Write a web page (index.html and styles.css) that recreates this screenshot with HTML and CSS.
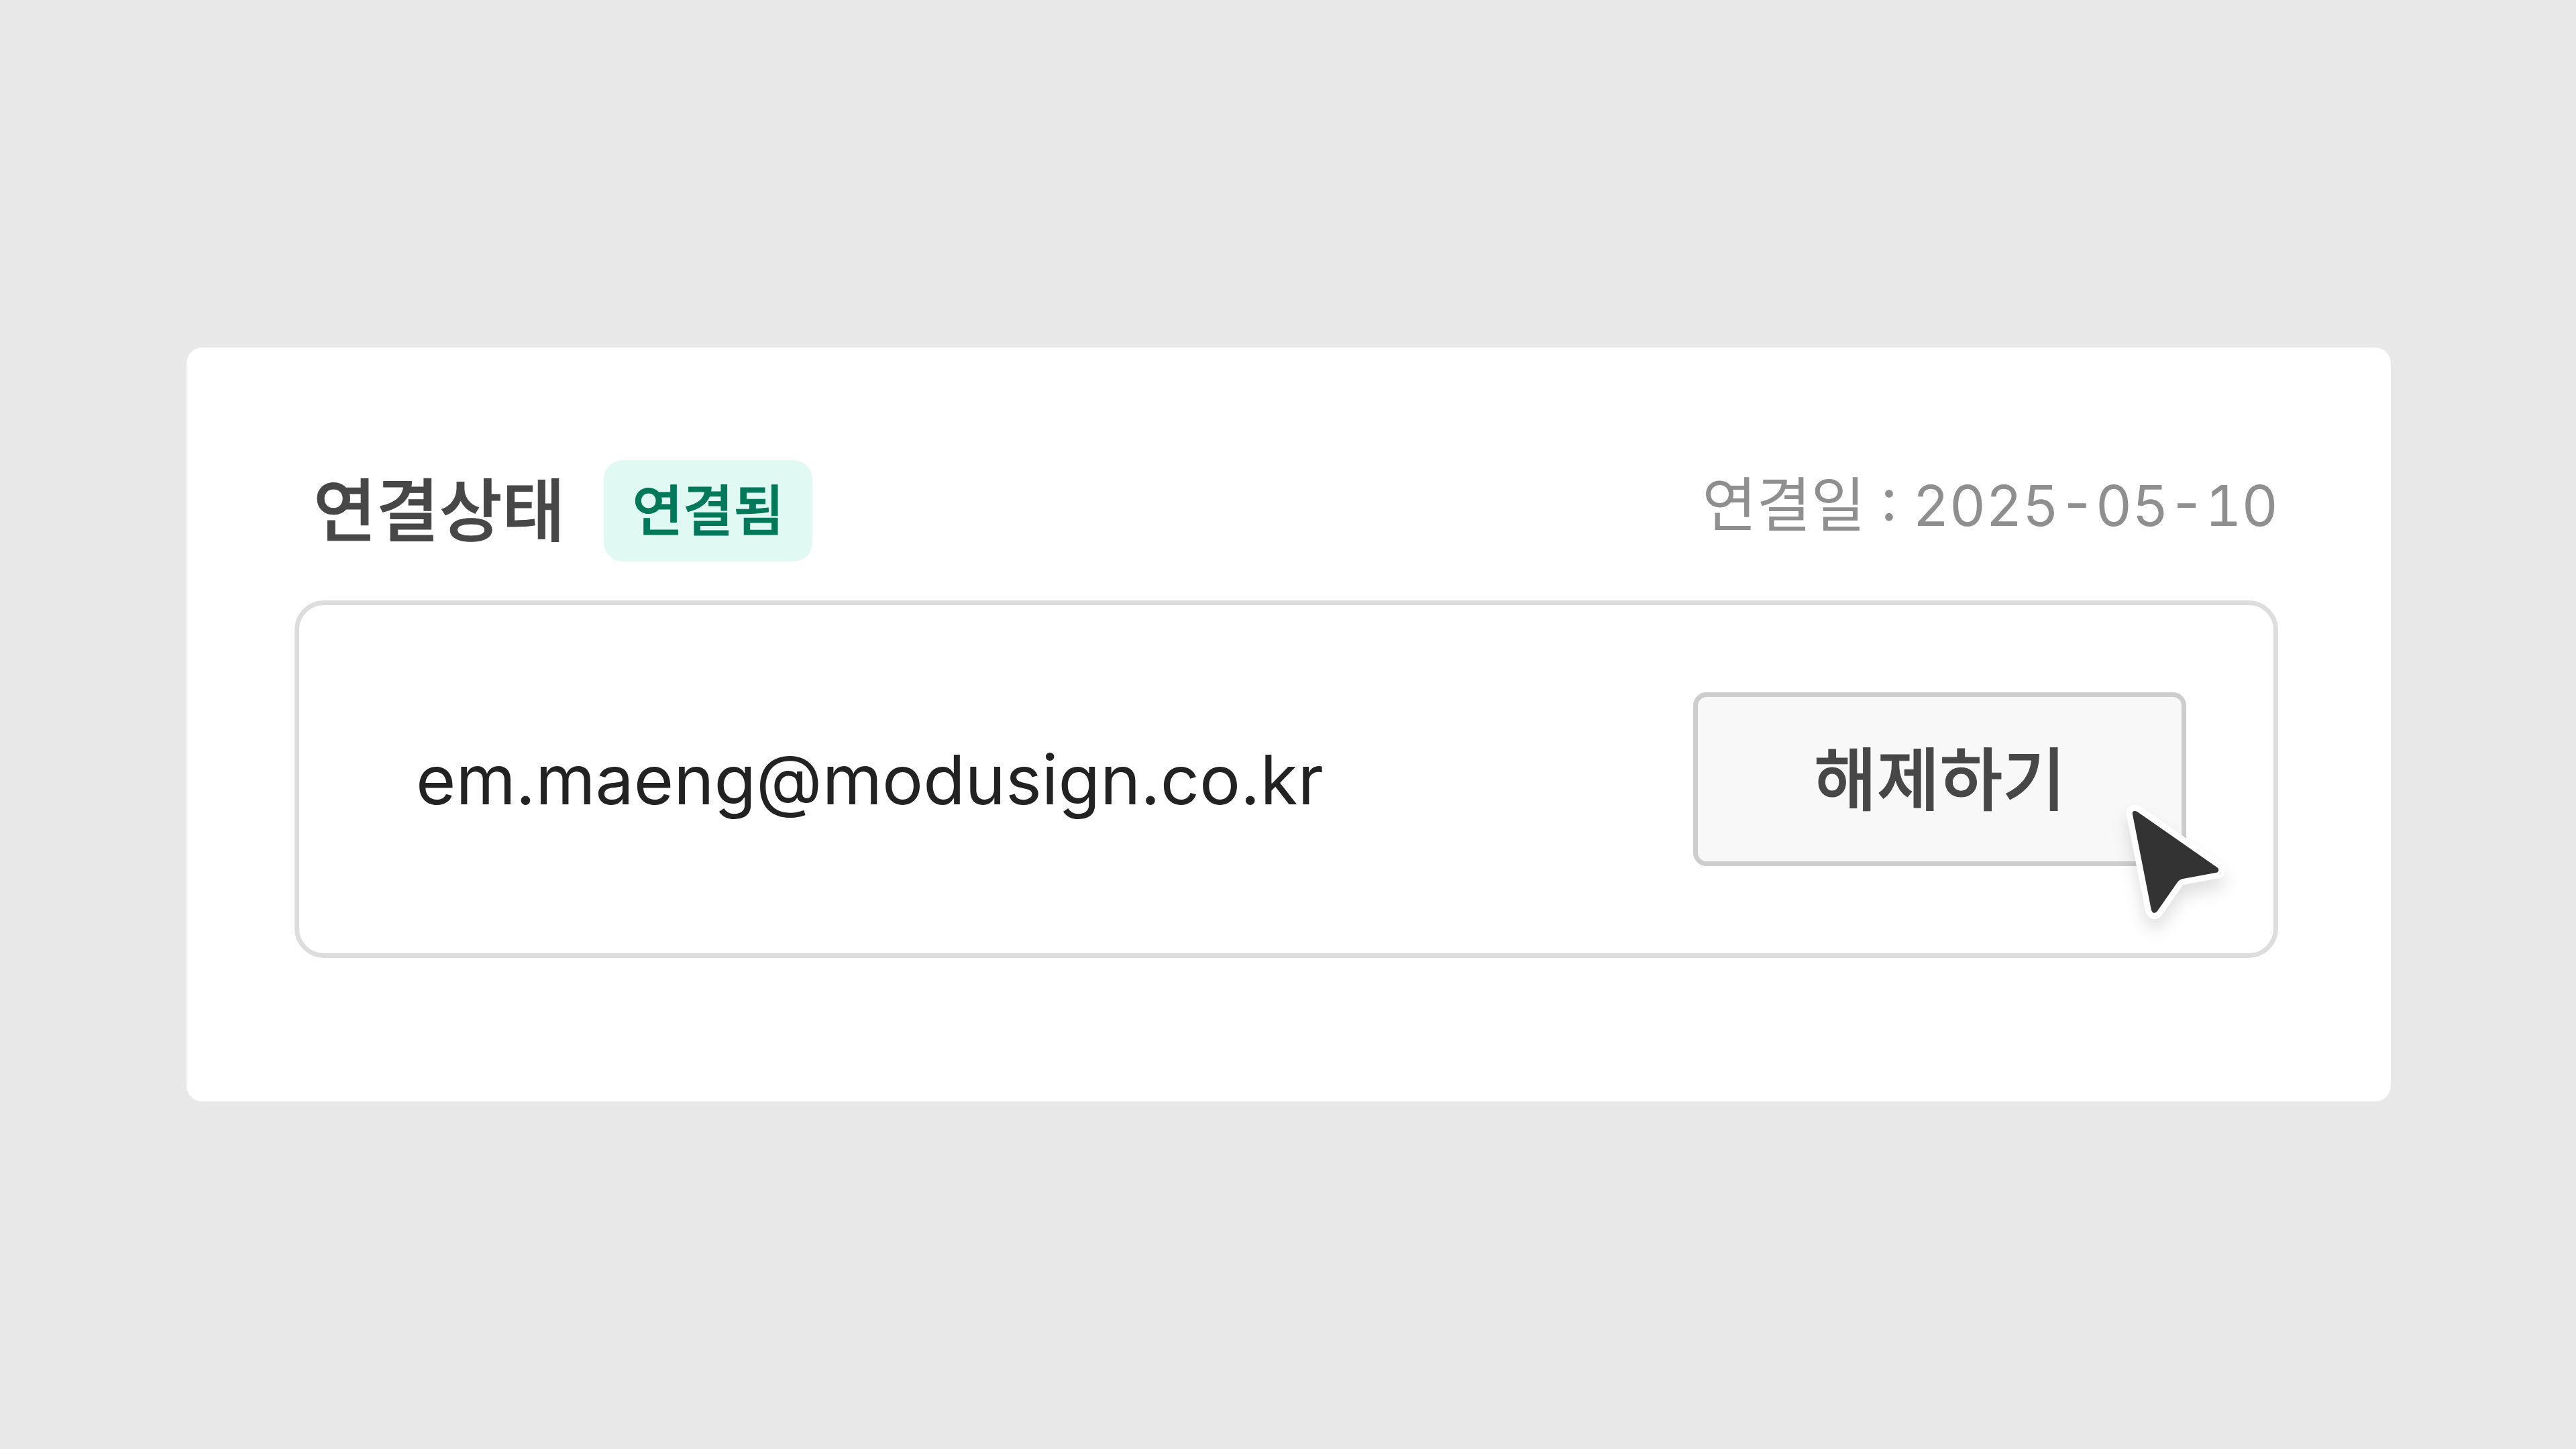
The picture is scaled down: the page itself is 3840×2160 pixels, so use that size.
FILE: index.html
```html
<!DOCTYPE html>
<html lang="ko">
<head>
    <meta charset="UTF-8">
    <meta name="viewport" content="width=device-width, initial-scale=1.0">
    <title>연결상태</title>
    <link rel="stylesheet" href="styles.css">
</head>
<body>
    <main class="card">
        <header class="card-header">
            <h1>연결상태</h1>
            <span class="badge">연결됨</span>
            <p class="date">연결일 : <time datetime="2025-05-10">2025-05-10</time></p>
        </header>

        <section class="account">
            <p class="email">em.maeng@modusign.co.kr</p>
            <div class="action">
                <button type="button">해제하기</button>
                <svg class="cursor" viewBox="0 0 200 240" aria-hidden="true">
                    <path d="M29 34Q28 29 32 29Q34 29 36 30L155 113Q158 115 157 118Q156 121 153 121L104 130Q99 131 96 135L66 178Q64 181 61 181Q58 180 57 177Z"/>
                </svg>
            </div>
        </section>
    </main>
</body>
</html>
```
FILE: styles.css
```css
* {
    box-sizing: border-box;
}
body {
    font-family: Inter, "Noto Sans CJK KR", sans-serif;
    margin: 0;
    padding: 0 276px 0 278px;
    min-height: 100vh;
    display: flex;
    align-items: center;
    background: #e8e8e8;
    color: #474747;
}
h1, p {
    margin: 0;
}
/* medium is a little thin for the labels, bold is too heavy */
h1, .badge, button {
    font-weight: 500;
    -webkit-text-stroke: 1px currentColor;
}
.card {
    flex: 1;
    padding: 168px 168px 214px 161px;
    background: #fff;
    border-radius: 24px;
}
.card-header {
    display: flex;
    align-items: center;
    margin-bottom: 58px;
    padding-left: 28px;
}
h1 {
    font-size: 102px;
    line-height: 148px;
}
.badge {
    margin-left: 58px;
    padding: 0 42px;
    background: #e1f9f3;
    color: #00795a;
    border-radius: 28px;
    font-size: 82px;
    line-height: 151px;
}
.date {
    margin-left: auto;
    padding-bottom: 18px;
    color: #8f8f8f;
    font-size: 88px;
    line-height: 128px;
    font-feature-settings: "case", "tnum";
}
.date time {
    font-size: 84px;
}
.account {
    display: flex;
    align-items: center;
    justify-content: space-between;
    padding: 130px;
    padding-left: 174px;
    border: 7px solid #ddd;
    border-radius: 44px;
}
.email {
    color: #222;
    font-size: 102px;
    line-height: 148px;
}
.action {
    position: relative;
}
button {
    display: block;
    width: 735px;
    height: 259px;
    padding: 0 0 12px;
    background: #f8f8f8;
    border: 7px solid #cdcdcd;
    border-radius: 20px;
    color: #474747;
    font-family: inherit;
    font-size: 102px;
    cursor: pointer;
}
button:hover {
    background: #eee;
}
/* pointer over the button's corner */
.cursor {
    position: absolute;
    right: -91px;
    bottom: -129px;
    width: 200px;
    height: 240px;
    fill: #333;
    stroke: #fff;
    stroke-width: 18px;
    stroke-linejoin: round;
    paint-order: stroke;
    filter: drop-shadow(0 16px 12px rgba(0, 0, 0, 0.12));
    pointer-events: none;
}
```
